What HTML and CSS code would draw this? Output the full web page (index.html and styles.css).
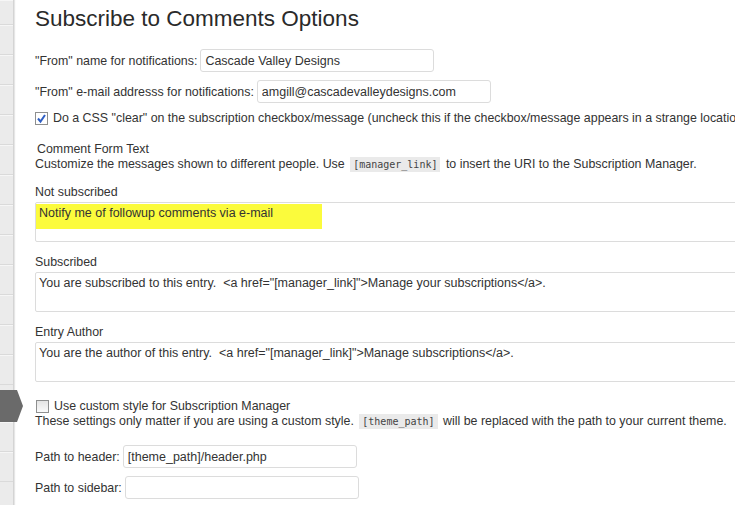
FILE: index.html
```
<!DOCTYPE html>
<html lang="en">
<head>
    <meta charset="UTF-8">
    <title>Subscribe to Comments Options</title>
    <link rel="stylesheet" href="styles.css">
</head>
<body>

<div class="wrap">
    <!-- Menu laterale -->
    <div class="sidebar">
        <div class="item first"></div>
        <div class="item"></div>
        <div class="item"></div>
        <div class="item"></div>
        <div class="item"></div>
        <div class="item"></div>
        <div class="item"></div>
        <div class="item"></div>
        <div class="item"></div>
        <div class="item"></div>
        <div class="item"></div>
        <div class="item"></div>
        <div class="item"></div>
        <div class="item current"></div>
        <div class="item"></div>
        <div class="item"></div>
    </div>

    <div class="content">
        <h2>Subscribe to Comments Options</h2>

        <div class="row">
            <label for="from-name">"From" name for notifications:</label>
            <input type="text" id="from-name" value="Cascade Valley Designs">
        </div>
        <div class="row">
            <label for="from-email">"From" e-mail addresss for notifications:</label>
            <input type="text" id="from-email" value="amgill@cascadevalleydesigns.com">
        </div>

        <div class="check-row first-check">
            <span class="check on"><svg width="11" height="11" viewBox="0 0 11 11"><path d="M2 5.5 L4.5 8.5 L9 2" fill="none" stroke="#2f5fc4" stroke-width="2"/></svg></span>
            <span>Do a CSS "clear" on the subscription checkbox/message (uncheck this if the checkbox/message appears in a strange location)</span>
        </div>

        <p class="section-title">Comment Form Text</p>
        <p class="line">Customize the messages shown to different people. Use <code>[manager_link]</code> to insert the URI to the Subscription Manager.</p>

        <p class="field-label">Not subscribed</p>
        <div class="textarea first-area">
            <div class="highlight">Notify me of followup comments via e-mail</div>
        </div>

        <p class="field-label">Subscribed</p>
        <div class="textarea">You are subscribed to this entry.&nbsp; &lt;a href="[manager_link]"&gt;Manage your subscriptions&lt;/a&gt;.</div>

        <p class="field-label">Entry Author</p>
        <div class="textarea">You are the author of this entry.&nbsp; &lt;a href="[manager_link]"&gt;Manage subscriptions&lt;/a&gt;.</div>

        <div class="check-row second-check">
            <span class="check"></span>
            <span>Use custom style for Subscription Manager</span>
        </div>
        <p class="line">These settings only matter if you are using a custom style. <code>[theme_path]</code> will be replaced with the path to your current theme.</p>

        <div class="row path-first">
            <label for="header-path">Path to header:</label>
            <input type="text" id="header-path" value="[theme_path]/header.php">
        </div>
        <div class="row">
            <label for="sidebar-path">Path to sidebar:</label>
            <input type="text" id="sidebar-path" value="">
        </div>
    </div>
</div>

</body>
</html>
```

FILE: styles.css
```
body { margin: 0; background: #fff; font-family: "Liberation Sans", Arial, sans-serif; font-size: 12.4px; color: #333; overflow: hidden; }
.wrap { display: flex; height: 505px; }

.sidebar { width: 13px; flex: none; background: #ebebeb; border-right: 1px solid #d4d4d4; box-shadow: 1px 0 1px #e6e6e6; }
.item { height: 28px; border-bottom: 1px solid #dadada; border-top: 1px solid #f6f6f6; position: relative; }
.item.first { height: 23px; }
.item.current { height: 32px; margin-top: 5px; border: none; }
.item.current::after { content: ""; position: absolute; left: 0; top: 0; width: 23px; height: 32px; background: #6a6a6a; clip-path: polygon(0 0, 17px 0, 23px 50%, 17px 100%, 0 100%); }

.content { flex: none; width: 720px; padding-left: 21px; white-space: nowrap; }
h2 { font-size: 22.5px; font-weight: normal; color: #2a2a2a; line-height: 29px; margin: 4px 0 16px; }

.row { display: flex; align-items: center; height: 23px; margin-bottom: 8px; }
.row label { margin-right: 3px; }
.row input { width: 234px; height: 23px; box-sizing: border-box; border: 1px solid #dcdcdc; border-radius: 3px; padding: 0 4px; font: inherit; font-size: 12.5px; color: #333; }
.row.path-first { margin-top: 16px; }
.row.path-first label { margin-right: 3px; }

.check-row { display: flex; align-items: center; line-height: 15px; }
.first-check { margin-top: 8px; }
.second-check { margin-top: 17px; padding-left: 1px; }
.check { width: 11px; height: 11px; border: 1px solid #8e8f8f; background: linear-gradient(#e4e4e4, #fafafa); margin-right: 5px; display: inline-flex; }
.check.on { background: #fff; }

p { margin: 0; line-height: 15px; }
.section-title { margin-top: 16px; padding-left: 2px; }
code { font-family: "DejaVu Sans Mono", monospace; font-size: 10px; background: #eaeaea; padding: 2px 3px; color: #444; margin: 0 2px; }

.field-label { margin-top: 13px; margin-bottom: 2px; }
.textarea { height: 40px; box-sizing: border-box; border: 1px solid #dcdcdc; border-radius: 2px; padding: 3px 3px 0; line-height: 15px; font-size: 12.5px; }
.textarea.first-area { padding: 1px 0 0; }
.highlight { width: 281px; height: 23px; padding: 2px 2px 0 3px; background: #fbfb3c; }
```
